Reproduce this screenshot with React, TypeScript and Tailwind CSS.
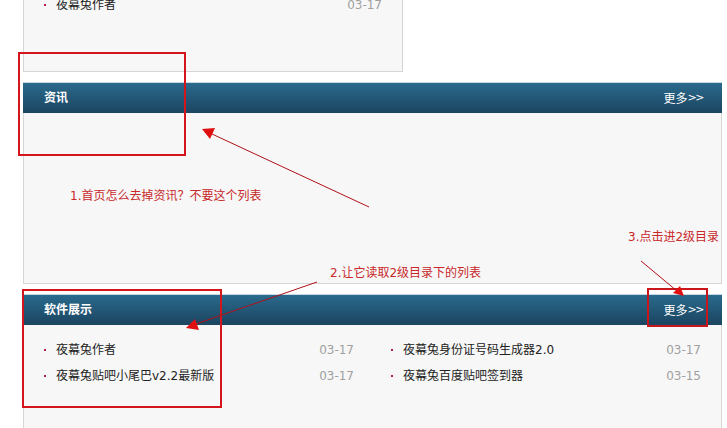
import React from "react";

const font = { fontFamily: '"DejaVu Sans", "Noto Sans CJK SC", sans-serif' };

function Row({ title, date, width }: { title: string; date: string; width: string }) {
  return (
    <div className={`flex h-[26px] items-center ${width}`}>
      <span className="mr-[10px] h-[2px] w-[2px] bg-[#b0204a]" />
      <span className="flex-1 text-[12px] text-[#222]">{title}</span>
      <span className="text-[12px] text-[#a0a0a0]">{date}</span>
    </div>
  );
}

function Header({ title }: { title: string }) {
  return (
    <div className="flex h-[31px] items-center justify-between border-t border-[#c9d9e3] bg-gradient-to-b from-[#2a6a8d] to-[#1b4560] pl-[21px] pr-[19px] text-white">
      <span className="text-[12px] font-bold">{title}</span>
      <span className="flex items-center text-[12px]">
        <span className="[font-family:'Noto_Sans_CJK_SC',sans-serif]">更多</span>
        <span className="text-[11px] tracking-[-1.5px]">&gt;&gt;</span>
      </span>
    </div>
  );
}

export default function App() {
  return (
    <div className="relative h-[428px] w-[727px] overflow-hidden bg-white" style={font}>
      {/* top panel */}
      <div className="ml-[23px] h-[72px] w-[380px] overflow-hidden border-x border-b border-[#d6d6d6] bg-[#f7f7f7] pl-[20px]">
        <div className="-mt-[8px]">
          <Row title="夜幕兔作者" date="03-17" width="w-[338px]" />
        </div>
      </div>

      {/* 资讯 */}
      <div className="ml-[23px] mt-[10px] w-[699px]">
        <Header title="资讯" />
        <div className="h-[171px] border-x border-b border-[#d6d6d6] bg-[#f7f7f7]" />
      </div>

      {/* 软件展示 */}
      <div className="ml-[23px] mt-[10px] w-[699px]">
        <Header title="软件展示" />
        <div className="h-[120px] border-x border-[#d6d6d6] bg-[#f7f7f7] pl-[20px] pt-[12px]">
          <div className="grid grid-cols-[310px_310px] gap-x-[37px]">
            <Row title="夜幕兔作者" date="03-17" width="w-full" />
            <Row title="夜幕兔身份证号码生成器2.0" date="03-17" width="w-full" />
            <Row title="夜幕兔贴吧小尾巴v2.2最新版" date="03-17" width="w-full" />
            <Row title="夜幕兔百度贴吧签到器" date="03-15" width="w-full" />
          </div>
        </div>
      </div>

      {/* annotations */}
      <div className="absolute left-[18px] top-[52px] h-[104px] w-[168px] border-2 border-[#d4161c]" />
      <div className="absolute left-[22px] top-[289px] h-[119px] w-[200px] border-2 border-[#d4161c]" />
      <div className="absolute left-[647px] top-[288px] h-[39px] w-[61px] border-2 border-[#c8161c]" />

      <div className="absolute left-[70px] top-[187px] text-[12px] text-[#c8282a]">1.首页怎么去掉资讯？不要这个列表</div>
      <div className="absolute left-[330px] top-[264px] text-[12px] text-[#c8282a]">2.让它读取2级目录下的列表</div>
      <div className="absolute left-[628px] top-[228px] text-[12px] text-[#c8282a]">3.点击进2级目录</div>

      <svg className="pointer-events-none absolute left-0 top-0" width="727" height="428">
        <g stroke="#b01018" strokeWidth="1">
          <line x1="369" y1="207" x2="212" y2="134" />
          <line x1="317" y1="282" x2="196" y2="324" />
          <line x1="641" y1="261" x2="677" y2="291" />
        </g>
        <g fill="#e01010">
          <polygon points="202,129 215,128 210,139" />
          <polygon points="186,328 195,319 199,330" />
          <polygon points="684,296 673,293 680,286" />
        </g>
      </svg>
    </div>
  );
}
